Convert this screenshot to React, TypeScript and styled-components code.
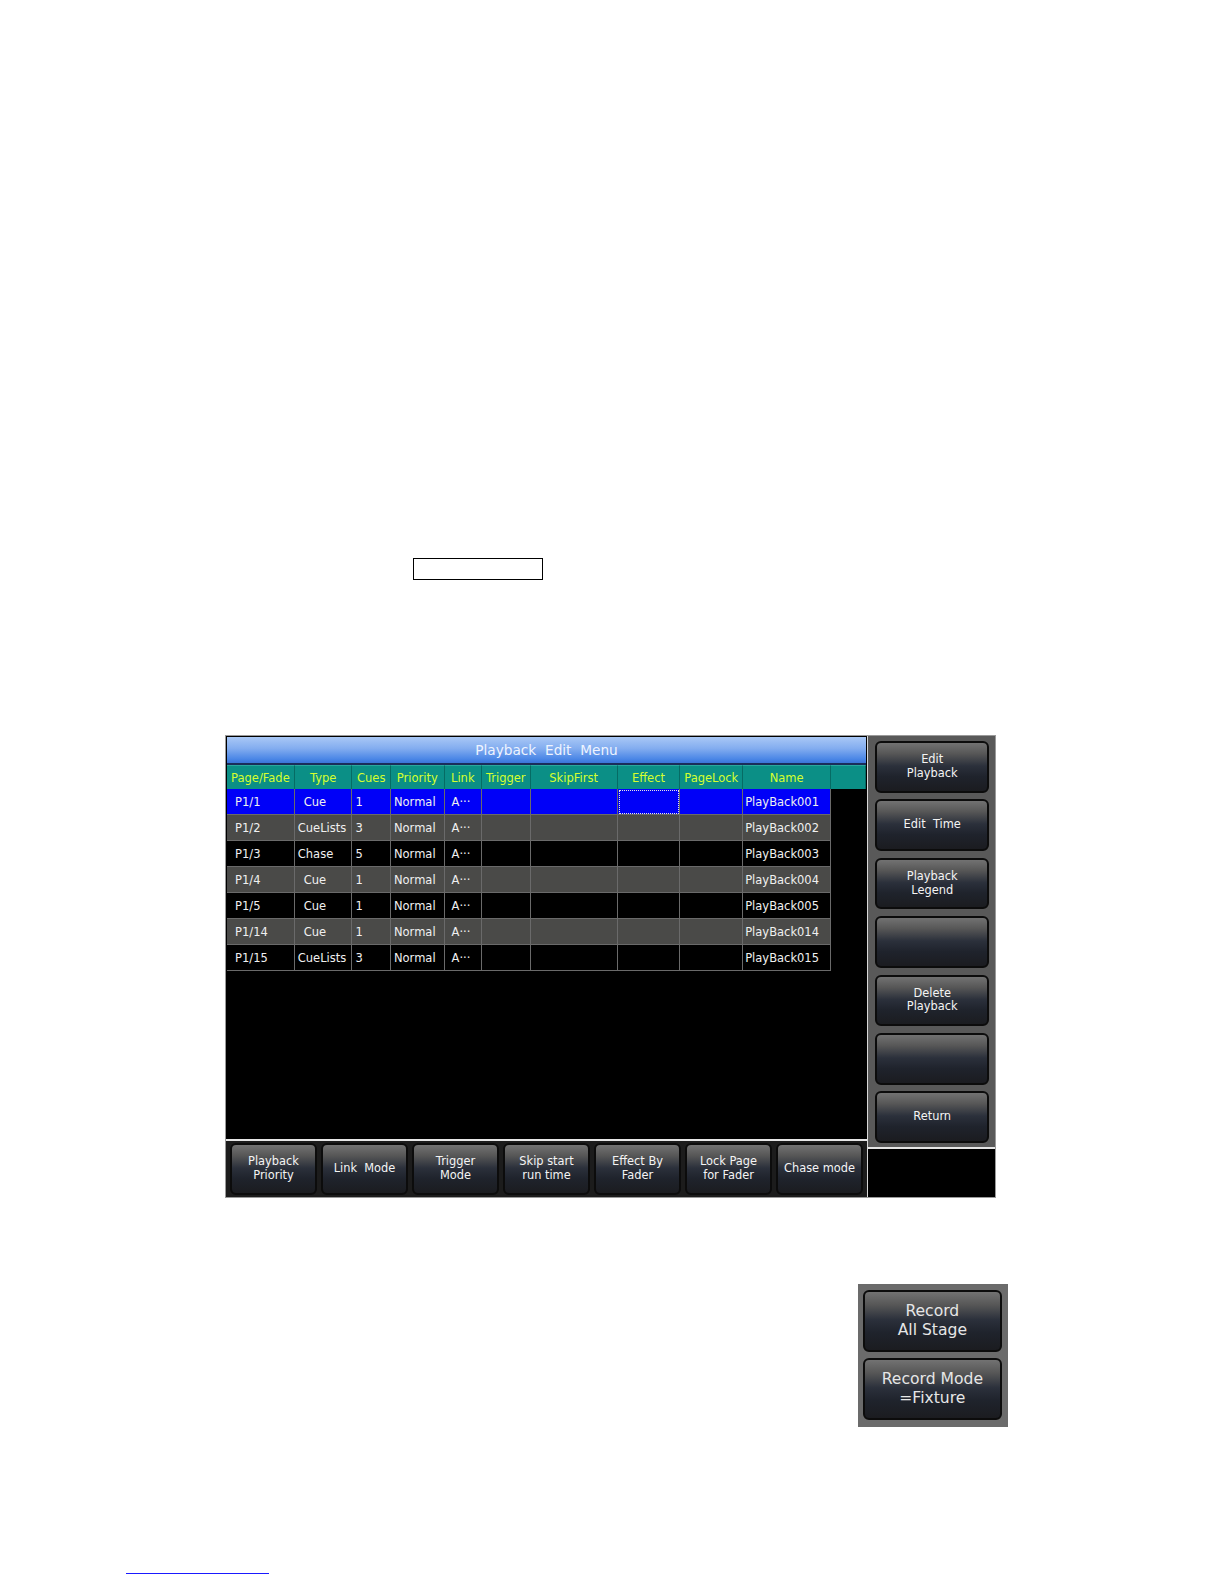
import React from "react";
import styled, { createGlobalStyle } from "styled-components";

const Global = createGlobalStyle`
  html, body { margin: 0; padding: 0; background: #ffffff; }
  body { font-family: "DejaVu Sans", "Liberation Sans", sans-serif; }
`;

const Page = styled.div`
  display: flex;
  flex-direction: column;
  align-items: flex-start;
  padding-top: 558px;
`;

const EmptyBox = styled.div`
  margin-left: 413px;
  width: 130px;
  height: 22px;
  border: 1px solid #000;
  box-sizing: border-box;
`;

const Screen = styled.div`
  margin-top: 155px;
  margin-left: 225px;
  width: 771px;
  height: 463px;
  display: flex;
  gap: 1px;
  background: #d8d8d8;
  box-sizing: border-box;
  border: 1px solid #9a9a9a;
`;

const LeftCol = styled.div`
  width: 641px;
  display: flex;
  flex-direction: column;
  gap: 2px;
  background: #e6e6e6;
`;

const RightCol = styled.div`
  flex: 1;
  display: flex;
  flex-direction: column;
  gap: 2px;
  background: #e6e6e6;
`;

const MainPanel = styled.div`
  height: 403px;
  background: #000;
  border: 1px solid #000;
  box-sizing: border-box;
  display: flex;
  flex-direction: column;
`;

const TitleBar = styled.div`
  height: 26px;
  display: flex;
  align-items: center;
  justify-content: center;
  background: linear-gradient(#a9c8f6 0%, #82acef 45%, #4a86e6 85%, #3b74d8 100%);
  color: #eef4ff;
  font-size: 13.7px;
  border-bottom: 2px solid #1a2d5a;
`;

const cols = "67.8px 57.7px 38.5px 53.6px 37.4px 48.6px 87px 62.8px 62.8px 88px 1fr";

const HeaderRow = styled.div`
  display: grid;
  grid-template-columns: ${cols};
  height: 24.3px;
  background: #0b8f86;
`;

const HeadCell = styled.div`
  display: flex;
  align-items: center;
  justify-content: center;
  overflow: hidden;
  white-space: nowrap;
  color: #d6ff2e;
  font-size: 11.5px;
  border-right: 1px solid #066b64;
  border-top: 1px solid #2aa79e;
`;

const Row = styled.div`
  display: grid;
  grid-template-columns: ${cols};
  height: 26px;
`;

const Cell = styled.div<{ $bg: string; $pad: number; $focus?: boolean; $last?: boolean }>`
  display: flex;
  align-items: center;
  padding-left: ${(p) => p.$pad}px;
  background: ${(p) => (p.$last ? "#000" : p.$bg)};
  color: #f0f0f0;
  font-size: 11.5px;
  white-space: pre;
  overflow: hidden;
  box-sizing: border-box;
  border-right: ${(p) => (p.$last ? "none" : "1px solid #6a6a6a")};
  border-bottom: ${(p) => (p.$last ? "none" : "1px solid #6a6a6a")};
  outline: ${(p) => (p.$focus ? "1px dotted #e8e8e8" : "none")};
  outline-offset: -2px;
`;

const BottomBar = styled.div`
  flex: 1;
  background: #1c1c1c;
  display: flex;
  gap: 4px;
  padding: 2px 3px 2px 4px;
  box-sizing: border-box;
`;

const Button = styled.div<{ $size: number }>`
  display: flex;
  align-items: center;
  justify-content: center;
  text-align: center;
  box-sizing: border-box;
  border: 2px solid #0c0c0c;
  border-radius: 6px;
  background: linear-gradient(#727272 0%, #575757 22%, #2b303b 48%, #1f232c 70%, #1b1c20 100%);
  color: #f4f4f4;
  font-size: ${(p) => p.$size}px;
  line-height: 1.2;
  white-space: pre;
`;

const BottomButton = styled(Button)`
  width: 87px;
  height: 51.6px;
`;

const SidePanel = styled.div`
  height: 411px;
  background: #595959;
  display: flex;
  flex-direction: column;
  gap: 6.8px;
  padding: 5px 0 0 7px;
  box-sizing: border-box;
`;

const SideButton = styled(Button)`
  width: 114.4px;
  height: 51.6px;
`;

const BlackBox = styled.div`
  flex: 1;
  background: #000;
`;

const RecordPanel = styled.div`
  margin-top: 86px;
  margin-left: 858px;
  width: 150px;
  height: 143px;
  background: #6b6b6b;
  display: flex;
  flex-direction: column;
  gap: 6px;
  padding: 6px 0 0 5px;
  box-sizing: border-box;
`;

const RecordButton = styled(Button)`
  width: 138.7px;
  height: 62px;
  color: #e6e6e6;
`;

const LinkLine = styled.div`
  margin-top: 146px;
  margin-left: 126px;
  width: 143px;
  height: 1px;
  background: #1a1aff;
`;

const headers = ["Page/Fade", "Type", "Cues", "Priority", "Link", "Trigger", "SkipFirst", "Effect", "PageLock", "Name", ""];

type R = { pf: string; type: string; cues: string; name: string };
const rows: R[] = [
  { pf: "P1/1", type: "Cue", cues: "1", name: "PlayBack001" },
  { pf: "P1/2", type: "CueLists", cues: "3", name: "PlayBack002" },
  { pf: "P1/3", type: "Chase", cues: "5", name: "PlayBack003" },
  { pf: "P1/4", type: "Cue", cues: "1", name: "PlayBack004" },
  { pf: "P1/5", type: "Cue", cues: "1", name: "PlayBack005" },
  { pf: "P1/14", type: "Cue", cues: "1", name: "PlayBack014" },
  { pf: "P1/15", type: "CueLists", cues: "3", name: "PlayBack015" },
];

const rowBg = (i: number) => (i === 0 ? "#0000f8" : i % 2 === 1 ? "#4a4a48" : "#000000");

const sideButtons = ["Edit\nPlayback", "Edit  Time", "Playback\nLegend", "", "Delete\nPlayback", "", "Return"];
const bottomButtons = ["Playback\nPriority", "Link  Mode", "Trigger\nMode", "Skip start\nrun time", "Effect By\nFader", "Lock Page\nfor Fader", "Chase mode"];

export default function App() {
  return (
    <>
      <Global />
      <Page>
        <EmptyBox />
        <Screen>
          <LeftCol>
            <MainPanel>
              <TitleBar>Playback&nbsp; Edit&nbsp; Menu</TitleBar>
              <HeaderRow>
                {headers.map((h, i) => (
                  <HeadCell key={i}>{h}</HeadCell>
                ))}
              </HeaderRow>
              {rows.map((r, i) => {
                const bg = rowBg(i);
                const vals: [string, number][] = [
                  [r.pf, 8],
                  [r.type, r.type === "Cue" ? 9 : 3],
                  [r.cues, 3],
                  ["Normal", 3],
                  ["A\u00b7\u00b7\u00b7", 7],
                  ["", 0],
                  ["", 0],
                  ["", 0],
                  ["", 0],
                  [r.name, 2],
                ];
                return (
                  <Row key={i}>
                    {vals.map(([v, p], j) => (
                      <Cell key={j} $bg={bg} $pad={p} $focus={i === 0 && j === 7}>
                        {v}
                      </Cell>
                    ))}
                    <Cell $bg={bg} $pad={0} $last />
                  </Row>
                );
              })}
            </MainPanel>
            <BottomBar>
              {bottomButtons.map((b, i) => (
                <BottomButton key={i} $size={11.4}>
                  {b}
                </BottomButton>
              ))}
            </BottomBar>
          </LeftCol>
          <RightCol>
            <SidePanel>
              {sideButtons.map((b, i) => (
                <SideButton key={i} $size={11.4}>
                  {b}
                </SideButton>
              ))}
            </SidePanel>
            <BlackBox />
          </RightCol>
        </Screen>
        <RecordPanel>
          <RecordButton $size={15.6}>{"Record\nAll Stage"}</RecordButton>
          <RecordButton $size={15.6}>{"Record Mode\n=Fixture"}</RecordButton>
        </RecordPanel>
        <LinkLine />
      </Page>
    </>
  );
}
